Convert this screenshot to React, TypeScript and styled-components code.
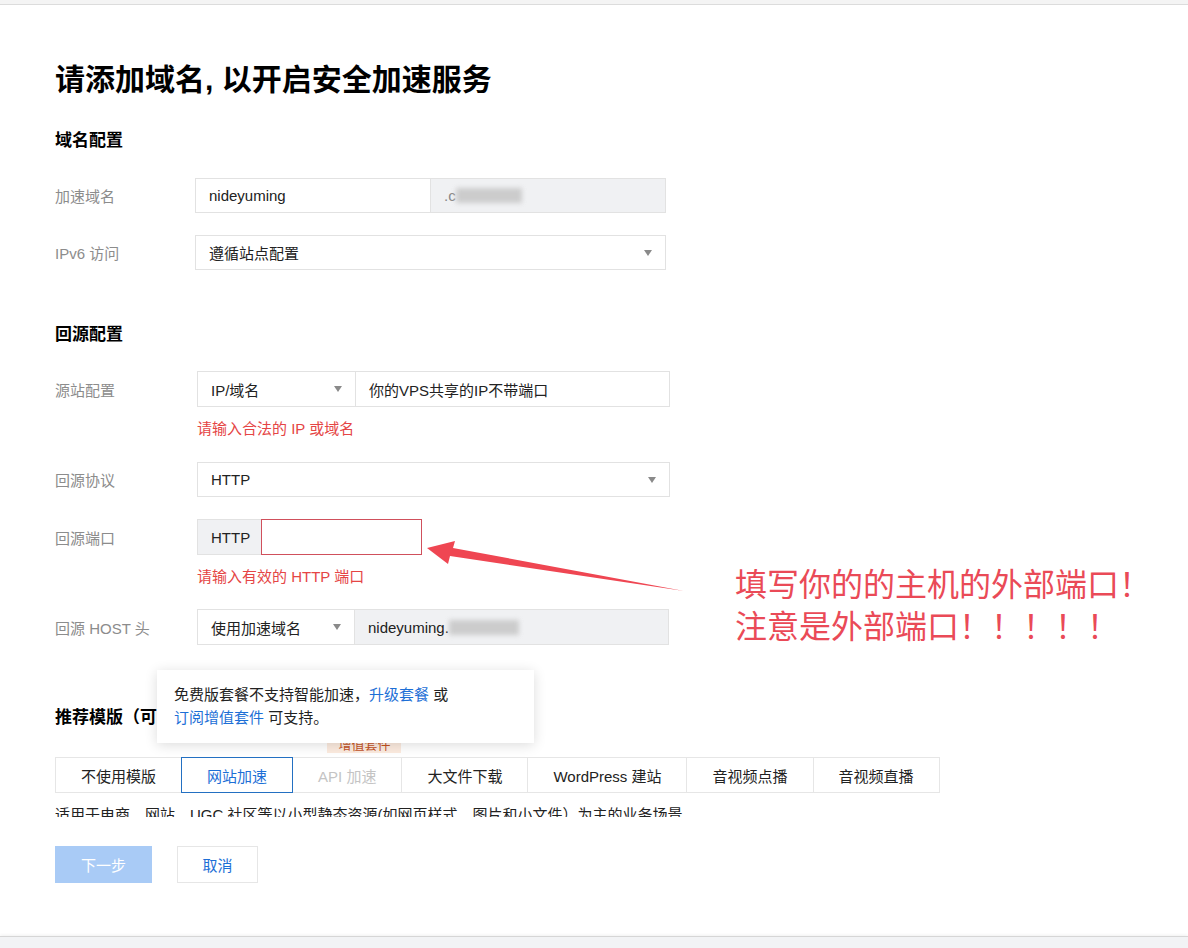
import React from "react";
import styled, { createGlobalStyle } from "styled-components";

const Global = createGlobalStyle`
  html, body { margin: 0; padding: 0; background: #fff; }
  body {
    font-family: "Liberation Sans", "Noto Sans CJK SC", sans-serif;
    color: #333;
  }
  * { box-sizing: border-box; }
`;

const Page = styled.div`
  position: relative;
  width: 1188px;
  height: 948px;
  display: flex;
  flex-direction: column;
  overflow: hidden;
  background: #fff;
`;

const TopStrip = styled.div`
  flex: none;
  height: 5px;
  background: #f4f4f4;
  border-bottom: 1px solid #dcdcdc;
`;

const Main = styled.main`
  flex: 1;
  padding: 55px 0 0 55px;
  display: flex;
  flex-direction: column;
  align-items: flex-start;
`;

const Footer = styled.div`
  flex: none;
  height: 12px;
  background: #f2f3f5;
  border-top: 1px solid #d6d6d6;
  box-shadow: 0 -1px 3px rgba(0, 0, 0, 0.06);
`;

const Title = styled.h1`
  margin: 0;
  font-size: 30px;
  line-height: 40px;
  font-weight: 700;
  color: #000;
`;

const SectionTitle = styled.h2<{ $mt: number }>`
  margin: ${(p) => p.$mt}px 0 0;
  font-size: 17px;
  line-height: 24px;
  font-weight: 700;
  color: #000;
`;

const Row = styled.div<{ $mt: number; $h: number }>`
  display: flex;
  align-items: center;
  margin-top: ${(p) => p.$mt}px;
  height: ${(p) => p.$h}px;
`;

const Label = styled.div<{ $w: number }>`
  width: ${(p) => p.$w}px;
  font-size: 15px;
  color: #8c8c8c;
`;

const Group = styled.div`
  display: flex;
  height: 100%;
`;

const Box = styled.div<{ $w: number; $gray?: boolean; $error?: boolean }>`
  width: ${(p) => p.$w}px;
  height: 100%;
  display: flex;
  align-items: center;
  justify-content: space-between;
  padding: 0 13px 0 13px;
  font-size: 15px;
  color: #222;
  background: ${(p) => (p.$gray ? "#f0f1f3" : "#fff")};
  border: 1px solid ${(p) => (p.$error ? "#d0505c" : "#e2e2e2")};
  position: relative;
  z-index: ${(p) => (p.$error ? 1 : 0)};
  & + & {
    margin-left: -1px;
  }
`;

const Caret = styled.span`
  width: 0;
  height: 0;
  border-left: 4.5px solid transparent;
  border-right: 4.5px solid transparent;
  border-top: 6px solid #8a8a8a;
`;

const Smudge = styled.span<{ $w: number }>`
  display: inline-block;
  width: ${(p) => p.$w}px;
  height: 15px;
  background: #c6c6c6;
  filter: blur(2.5px);
  opacity: 0.85;
  vertical-align: middle;
`;

const Inline = styled.span`
  display: flex;
  align-items: center;
`;

const Faint = styled.span`
  color: #888;
`;

const ErrorText = styled.div<{ $ml: number }>`
  margin: 12px 0 0 ${(p) => p.$ml}px;
  font-size: 15px;
  line-height: 20px;
  color: #e54545;
`;

const Tabs = styled.div`
  display: flex;
  margin-top: 27px;
`;

const Tab = styled.div<{ $active?: boolean; $disabled?: boolean }>`
  position: relative;
  height: 36px;
  padding: 0 25px;
  display: flex;
  align-items: center;
  font-size: 15px;
  white-space: nowrap;
  border: 1px solid ${(p) => (p.$active ? "#2370c2" : "#e6e6e6")};
  z-index: ${(p) => (p.$active ? 1 : 0)};
  color: ${(p) => (p.$active ? "#1d6fd6" : p.$disabled ? "#c4c4c4" : "#222")};
  & + & {
    margin-left: -1px;
  }
`;

const Badge = styled.span`
  position: absolute;
  right: 0;
  bottom: calc(100% + 5px);
  height: 16px;
  line-height: 16px;
  padding: 0 11px;
  font-size: 13px;
  color: #c3521f;
  background: #fcebdf;
`;

const Desc = styled.div`
  margin-top: 13px;
  height: 11px;
  overflow: hidden;
  font-size: 15px;
  line-height: 18px;
  color: #222;
  white-space: nowrap;
`;

const Buttons = styled.div`
  display: flex;
  gap: 25px;
  margin-top: 29px;
`;

const Button = styled.button<{ $primary?: boolean; $w: number }>`
  width: ${(p) => p.$w}px;
  height: 37px;
  font-family: inherit;
  font-size: 15px;
  border: 1px solid ${(p) => (p.$primary ? "#a9cbf6" : "#e6e6e6")};
  background: ${(p) => (p.$primary ? "#a9cbf6" : "#fff")};
  color: ${(p) => (p.$primary ? "#fff" : "#1d6fd6")};
  padding: 0;
  cursor: pointer;
`;

const Tooltip = styled.div`
  position: absolute;
  left: 157px;
  top: 670px;
  width: 377px;
  height: 73px;
  padding: 13px 17px;
  background: #fff;
  box-shadow: 0 2px 12px rgba(0, 0, 0, 0.14);
  font-size: 15px;
  line-height: 23px;
  color: #222;
  z-index: 5;
`;

const Link = styled.span`
  color: #1d6fd6;
`;

const Note = styled.div`
  position: absolute;
  left: 735px;
  top: 561px;
  font-size: 32px;
  line-height: 42px;
  color: #ea4a57;
  white-space: nowrap;
  font-family: "Noto Sans CJK SC", sans-serif;
  font-weight: 400;
`;

const ArrowSvg = styled.svg`
  position: absolute;
  left: 425px;
  top: 538px;
  width: 262px;
  height: 56px;
  z-index: 6;
`;

export default function App() {
  return (
    <Page>
      <Global />
      <TopStrip />
      <Main>
        <Title>请添加域名, 以开启安全加速服务</Title>

        <SectionTitle $mt={29}>域名配置</SectionTitle>
        <Row $mt={25} $h={35}>
          <Label $w={140}>加速域名</Label>
          <Group>
            <Box $w={236}>nideyuming</Box>
            <Box $w={236} $gray>
              <Inline>
                <Faint>.c</Faint>
                <Smudge $w={66} />
              </Inline>
            </Box>
          </Group>
        </Row>
        <Row $mt={22} $h={35}>
          <Label $w={140}>IPv6 访问</Label>
          <Box $w={471}>
            遵循站点配置
            <Caret />
          </Box>
        </Row>

        <SectionTitle $mt={53}>回源配置</SectionTitle>
        <Row $mt={24} $h={36}>
          <Label $w={142}>源站配置</Label>
          <Group>
            <Box $w={159}>
              IP/域名
              <Caret />
            </Box>
            <Box $w={315}>你的VPS共享的IP不带端口</Box>
          </Group>
        </Row>
        <ErrorText $ml={142}>请输入合法的 IP 或域名</ErrorText>

        <Row $mt={23} $h={35}>
          <Label $w={142}>回源协议</Label>
          <Box $w={473}>
            HTTP
            <Caret />
          </Box>
        </Row>

        <Row $mt={22} $h={36}>
          <Label $w={142}>回源端口</Label>
          <Group>
            <Box $w={65} $gray>
              HTTP
            </Box>
            <Box $w={161} $error />
          </Group>
        </Row>
        <ErrorText $ml={142}>请输入有效的 HTTP 端口</ErrorText>

        <Row $mt={22} $h={36}>
          <Label $w={142}>回源 HOST 头</Label>
          <Group>
            <Box $w={158}>
              使用加速域名
              <Caret />
            </Box>
            <Box $w={315} $gray>
              <Inline>
                nideyuming.
                <Smudge $w={70} />
              </Inline>
            </Box>
          </Group>
        </Row>

        <SectionTitle $mt={61}>推荐模版（可选）</SectionTitle>

        <Tabs>
          <Tab>不使用模版</Tab>
          <Tab $active>网站加速</Tab>
          <Tab $disabled>
            API 加速
            <Badge>增值套件</Badge>
          </Tab>
          <Tab>大文件下载</Tab>
          <Tab>WordPress 建站</Tab>
          <Tab>音视频点播</Tab>
          <Tab>音视频直播</Tab>
        </Tabs>

        <Desc>适用于电商、网站、UGC 社区等以小型静态资源(如网页样式、图片和小文件）为主的业务场景</Desc>

        <Buttons>
          <Button $primary $w={97}>下一步</Button>
          <Button $w={81}>取消</Button>
        </Buttons>
      </Main>
      <Footer />

      <Tooltip>
        免费版套餐不支持智能加速，<Link>升级套餐</Link> 或
        <br />
        <Link>订阅增值套件</Link> 可支持。
      </Tooltip>

      <ArrowSvg viewBox="0 0 262 56">
        <polygon points="2,10 30,3 28,10 259,53 25,18 23,26" fill="#ef4652" />
      </ArrowSvg>

      <Note>
        填写你的的主机的外部端口！
        <br />
        注意是外部端口！！！！！
      </Note>
    </Page>
  );
}
